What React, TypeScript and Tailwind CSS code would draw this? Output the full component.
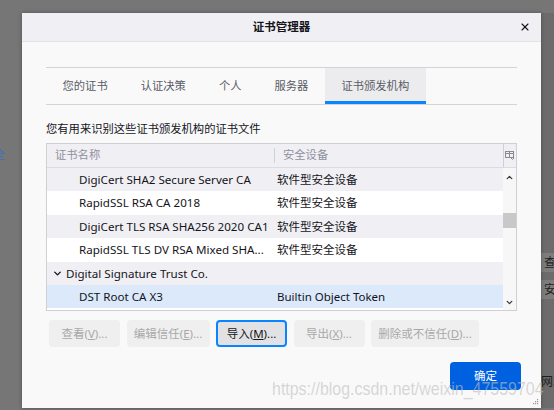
import { X, ChevronDown, ChevronUp } from 'lucide-react';

const font = { fontFamily: '"Noto Sans", "Noto Sans CJK SC", sans-serif' };

const tabs = ['您的证书', '认证决策', '个人', '服务器', '证书颁发机构'];

const rows = [
  { name: 'DigiCert SHA2 Secure Server CA', device: '软件型安全设备', kind: 'child' },
  { name: 'RapidSSL RSA CA 2018', device: '软件型安全设备', kind: 'child' },
  { name: 'DigiCert TLS RSA SHA256 2020 CA1', device: '软件型安全设备', kind: 'child' },
  { name: 'RapidSSL TLS DV RSA Mixed SHA...', device: '软件型安全设备', kind: 'child' },
  { name: 'Digital Signature Trust Co.', device: '', kind: 'group' },
  { name: 'DST Root CA X3', device: 'Builtin Object Token', kind: 'selected' },
];

function ColumnPicker() {
  return (
    <svg width="10" height="9" viewBox="0 0 10 9" fill="none" stroke="#8a8a8a" strokeWidth="1">
      <rect x="0.5" y="0.5" width="8" height="6" />
      <line x1="0.5" y1="2.5" x2="8.5" y2="2.5" />
      <line x1="4.5" y1="0.5" x2="4.5" y2="6.5" />
      <path d="M6 7 L7.5 8.5 L9 7" />
    </svg>
  );
}

function Btn({ label, focused }: { label: React.ReactNode; focused?: boolean }) {
  if (focused) {
    return (
      <div className="h-[27px] w-[71px] rounded-[4px] border-2 border-[#0a84ff] bg-[#e2e2e4] flex items-center justify-center text-[11.5px] text-[#15141a]">
        {label}
      </div>
    );
  }
  return (
    <div className="h-[27px] rounded-[4px] bg-[#efefef] flex items-center justify-center text-[11.5px] text-[#a8a8a8]">
      {label}
    </div>
  );
}

export default function App() {
  return (
    <div className="relative w-[554px] h-[410px] overflow-hidden bg-[#767676]" style={font}>
      <div className="flex pt-[13px]">
        {/* page behind, left edge */}
        <div className="w-[22px] shrink-0 overflow-hidden">
          <div className="mt-[133px] -ml-[7px] text-[12px] text-[#3a6fc4]">全</div>
        </div>

        {/* dialog */}
        <div className="relative w-[519px] h-[395px] shrink-0 bg-[#f9f9fa] shadow-[0_0_4px_rgba(0,0,0,0.3)] flex flex-col">
          <div className="h-[29px] bg-[#f0f0f4] border-b border-[#e3e3e6] flex items-center justify-center relative">
            <span className="text-[11.5px] font-bold text-[#15141a]">证书管理器</span>
            <X className="absolute right-[10px] top-[8px] w-[12px] h-[12px] text-[#15141a]" strokeWidth={2.2} />
          </div>

          <div className="px-[24px] pt-[25px] flex flex-col">
            {/* tabs */}
            <div className="h-[38px] border-y border-[#d4d4d6] flex">
              {tabs.map((t, i) => {
                const active = i === tabs.length - 1;
                return (
                  <div
                    key={t}
                    className={`px-[16.5px] pt-[3px] flex items-center text-[11.3px] border-b-[3px] ${
                      active ? 'bg-[#ececef] border-[#0a84ff] text-[#5b5b66]' : 'border-transparent text-[#5b5b66]'
                    }`}
                  >
                    {t}
                  </div>
                );
              })}
            </div>

            <div className="mt-[16px] text-[11.3px] text-[#15141a] leading-[16px]">您有用来识别这些证书颁发机构的证书文件</div>

            {/* tree table */}
            <div className="mt-[6px] h-[168px] border border-[#cfcfd4] bg-white flex flex-col overflow-hidden">
              <div className="h-[24px] shrink-0 bg-[#f0f0f4] border-b border-[#dcdce0] flex items-center text-[11.3px] text-[#8f8f9d]">
                <div className="w-[228px] pl-[8px] border-r border-[#cfcfd4] h-[15px] flex items-center">证书名称</div>
                <div className="flex-1 pl-[8px]">安全设备</div>
                <div className="w-[13px] h-full border-l border-[#cfcfd4] flex items-center justify-center">
                  <ColumnPicker />
                </div>
              </div>
              <div className="flex flex-1 min-h-0">
                <div className="flex-1 flex flex-col">
                  {rows.map((r, i) => {
                    const bg =
                      r.kind === 'selected' ? 'bg-[#dbe9fb]' : i % 2 === 0 ? 'bg-[#f0f0f4]' : 'bg-white';
                    return (
                      <div key={r.name} className={`h-[23.4px] shrink-0 flex items-center text-[11.6px] text-[#15141a] ${bg}`}>
                        {r.kind === 'group' ? (
                          <div className="flex items-center pl-[5px] whitespace-nowrap">
                            <ChevronDown className="w-[11px] h-[11px] mr-[3px]" strokeWidth={3} />
                            {r.name}
                          </div>
                        ) : (
                          <>
                            <div className="w-[230px] shrink-0 pl-[32px] whitespace-nowrap">{r.name}</div>
                            <div className="whitespace-nowrap text-[11.5px]">{r.device}</div>
                          </>
                        )}
                      </div>
                    );
                  })}
                </div>
                <div className="w-[13px] shrink-0 bg-[#f7f7f7] flex flex-col items-center">
                  <ChevronUp className="w-[9px] h-[9px] mt-[5px] text-[#3a3a3a]" strokeWidth={3.5} />
                  <div className="mt-[31px] w-full h-[15px] bg-[#c8c8c8]" />
                  <div className="flex-1" />
                  <ChevronDown className="w-[9px] h-[9px] mb-[3px] text-[#3a3a3a]" strokeWidth={3.5} />
                </div>
              </div>
            </div>

            {/* action buttons */}
            <div className="mt-[9px] pl-[3px] flex gap-[6.5px]">
              <div className="w-[71px]"><Btn label={<span>查看(<u>V</u>)...</span>} /></div>
              <div className="w-[83px]"><Btn label={<span>编辑信任(<u>E</u>)...</span>} /></div>
              <Btn focused label={<span>导入(<u>M</u>)...</span>} />
              <div className="w-[71px]"><Btn label={<span>导出(<u>X</u>)...</span>} /></div>
              <div className="w-[108px]"><Btn label={<span>删除或不信任(<u>D</u>)...</span>} /></div>
            </div>

            <div className="mt-[15px] flex justify-end">
              <div className="w-[71px] h-[28px] mr-[-4px] rounded-[4px] bg-[#0061e0] flex items-center justify-center text-[11.5px] text-white">
                确定
              </div>
            </div>
          </div>

          {/* resize grip */}
          <svg className="absolute right-[2px] bottom-[3px]" width="7" height="7" viewBox="0 0 7 7" fill="#9a9a9a">
            <rect x="5" y="1" width="1.2" height="1.2" />
            <rect x="3" y="3" width="1.2" height="1.2" />
            <rect x="5" y="3" width="1.2" height="1.2" />
            <rect x="1" y="5" width="1.2" height="1.2" />
            <rect x="3" y="5" width="1.2" height="1.2" />
            <rect x="5" y="5" width="1.2" height="1.2" />
          </svg>
        </div>

        {/* page behind, right edge */}
        <div className="w-[13px] shrink-0 bg-[#6c6c6c] flex flex-col overflow-hidden text-[12px] text-[#1e1e1e]">
          <div className="mt-[240px] h-[19px] bg-[#7d7d7d] pl-[3px] leading-[19px] whitespace-nowrap">查</div>
          <div className="mt-[8px] h-[19px] bg-[#7d7d7d] pl-[3px] leading-[19px] whitespace-nowrap">安</div>
          <div className="mt-[74px] whitespace-nowrap">网站</div>
        </div>
      </div>

      {/* watermark */}
      <div
        className="absolute left-[272px] top-[379px] text-[19px] leading-[19px] whitespace-nowrap text-[rgba(190,190,190,0.6)] origin-left scale-x-[0.84]"
        style={{ fontFamily: '"Liberation Sans", Arial, sans-serif' }}
      >
        https://blog.csdn.net/weixin_47559704
      </div>
    </div>
  );
}
